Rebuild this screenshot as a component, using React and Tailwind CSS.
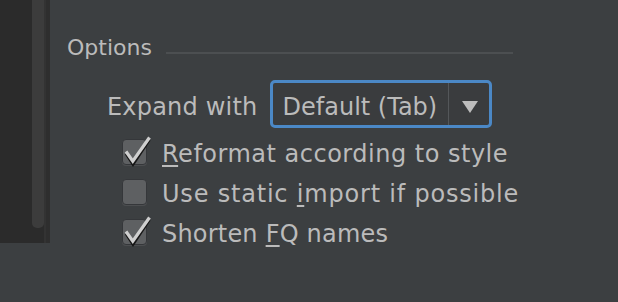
import React from "react";

const font = { fontFamily: '"DejaVu Sans", "Liberation Sans", sans-serif' };

const Check = ({ checked, before, mnemonic, after, track }) => (
  <div className="flex items-start h-[26px] ml-[72px]">
    <div className="relative w-[25px] h-[26px] rounded-[4px] bg-[#5e6062] border border-[#35373a] shadow-[0_1px_0_#4c4e50] shrink-0">
      {checked && (
        <svg className="absolute left-0 top-0 overflow-visible" width="25" height="26" viewBox="0 0 25 26">
          <polyline points="3.5,13.5 10,23.5 26,-0.5" fill="none" stroke="#161616" strokeWidth="3.8" strokeLinejoin="miter" />
          <polyline points="3,11.5 9.8,21.2 26.5,-2.5" fill="none" stroke="#cfcfcf" strokeWidth="3.2" strokeLinejoin="miter" />
        </svg>
      )}
    </div>
    <span className={`ml-[15px] text-[24px] leading-[30px] text-[#bbbbbb] whitespace-nowrap ${track}`}>
      {before}
      <span className="underline decoration-[2px] underline-offset-[3px]">{mnemonic}</span>
      {after}
    </span>
  </div>
);

export default function App() {
  return (
    <div className="w-[618px] h-[302px] bg-[#3c3f41] flex overflow-hidden" style={font}>
      {/* left panel */}
      <div className="flex h-[243px] shrink-0">
        <div className="w-[32px] bg-[#2b2b2b]" />
        <div className="w-[12px] bg-[#2b2b2b]">
          <div className="h-[228px] bg-[#3c3c3c] rounded-b-[5px]" />
        </div>
        <div className="w-[2px] bg-[#333333]" />
        <div className="w-[4px] bg-[#2e2e2e]" />
      </div>

      {/* content */}
      <div className="flex-1 flex flex-col">
        <div className="flex items-start mt-[34px] pl-[17px] pr-[105px] h-[28px]">
          <span className="text-[22px] leading-[28px] text-[#bbbbbb]">Options</span>
          <div className="flex-1 h-[2px] bg-[#4c4f51] ml-[14px] mt-[18px]" />
        </div>

        <div className="flex items-start h-[48px] mt-[18px] ml-[57px]">
          <span className="text-[24px] leading-[55px] tracking-[0.2px] text-[#bbbbbb] whitespace-nowrap">Expand with</span>
          <div className="ml-[12px] w-[222px] h-[48px] rounded-[5px] border-[3px] border-[#4b88c6] bg-[#3a3c3e] flex">
            <div className="w-[176px] h-full pl-[10px] border-r border-[#54575a]">
              <span className="block text-[24px] leading-[48px] text-[#bbbbbb] whitespace-nowrap">Default (Tab)</span>
            </div>
            <div className="flex-1 flex items-center justify-center pt-[6px] pl-[2px]">
              <svg width="16" height="12" viewBox="0 0 16 12">
                <polygon points="0,0 16,0 8,12" fill="#bdbdbd" />
              </svg>
            </div>
          </div>
        </div>

        <div className="flex flex-col gap-[14px] mt-[11px]">
          <Check checked before="" mnemonic="R" after="eformat according to style" track="tracking-[0.5px]" />
          <Check checked={false} before="Use static " mnemonic="i" after="mport if possible" track="tracking-[0.8px]" />
          <Check checked before="Shorten " mnemonic="F" after="Q names" track="tracking-[0.2px]" />
        </div>
      </div>
    </div>
  );
}
